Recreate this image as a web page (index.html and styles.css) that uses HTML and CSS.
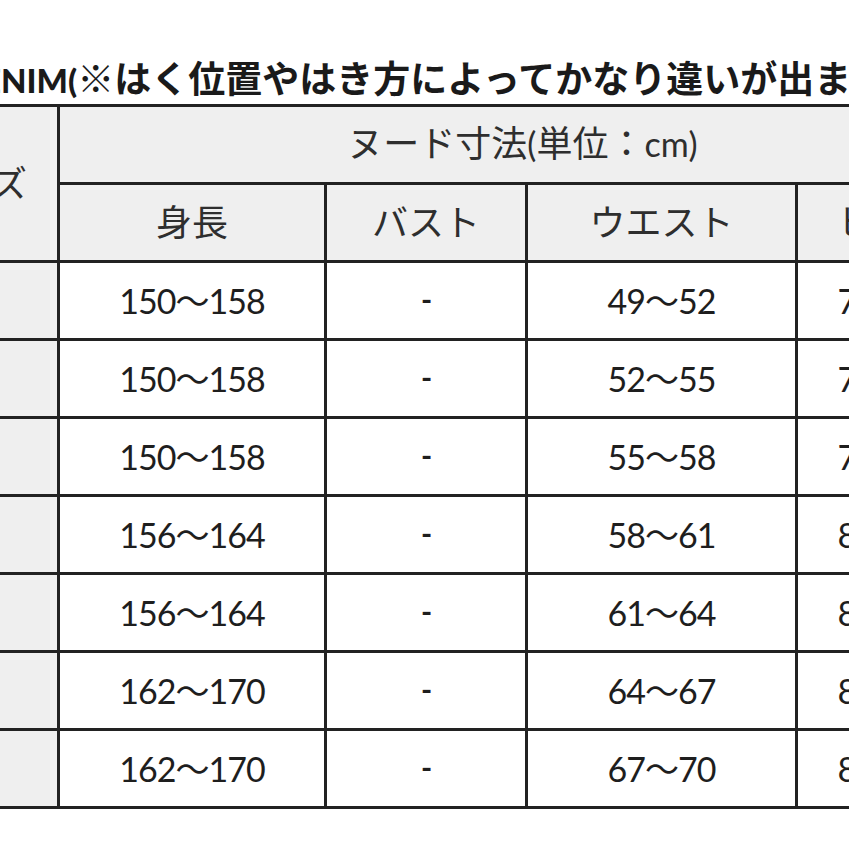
FILE: index.html
```html
<!DOCTYPE html>
<html lang="ja">
<head>
<meta charset="utf-8">
<title>DENIM サイズ表</title>
<link rel="stylesheet" href="styles.css">
</head>
<body>
<div class="page">
  <div class="title"><span class="lat">DENIM(</span>※はく位置やはき方によってかなり違いが出ます<span class="lat">)</span></div>
  <table class="size-table">
    <colgroup>
      <col class="c-size">
      <col class="c-height">
      <col class="c-bust">
      <col class="c-waist">
      <col class="c-hip">
    </colgroup>
    <thead>
      <tr>
        <th rowspan="2" class="size-h">サイズ</th>
        <th colspan="4">ヌード寸法<span class="lat">(</span>単位：<span class="lat">cm)</span></th>
      </tr>
      <tr>
        <th>身長</th>
        <th>バスト</th>
        <th>ウエスト</th>
        <th>ヒップ</th>
      </tr>
    </thead>
    <tbody>
      <tr><td class="size"></td><td>150〜158</td><td class="dash">-</td><td>49〜52</td><td>76〜80</td></tr>
      <tr><td class="size"></td><td>150〜158</td><td class="dash">-</td><td>52〜55</td><td>78〜82</td></tr>
      <tr><td class="size"></td><td>150〜158</td><td class="dash">-</td><td>55〜58</td><td>79〜83</td></tr>
      <tr><td class="size"></td><td>156〜164</td><td class="dash">-</td><td>58〜61</td><td>80〜84</td></tr>
      <tr><td class="size"></td><td>156〜164</td><td class="dash">-</td><td>61〜64</td><td>82〜86</td></tr>
      <tr><td class="size"></td><td>162〜170</td><td class="dash">-</td><td>64〜67</td><td>84〜88</td></tr>
      <tr><td class="size"></td><td>162〜170</td><td class="dash">-</td><td>67〜70</td><td>86〜90</td></tr>
    </tbody>
  </table>
</div>
</body>
</html>
```

FILE: styles.css
```css
html, body {
  margin: 0;
  padding: 0;
  background: #ffffff;
  overflow: hidden;
}

body {
  font-family: "Lato", "Noto Sans CJK JP", sans-serif;
  color: #222222;
}

.page {
  width: 1200px;
}

.title {
  margin: 61px 0 7px -43px;
  height: 36px;
  line-height: 36px;
  font-size: 37px;
  font-weight: 700;
  white-space: nowrap;
  color: #1a1a1a;
}

.title .lat {
  font-size: 33px;
  font-weight: 900;
}

.size-table {
  margin-left: -113px;
  border-collapse: collapse;
  table-layout: fixed;
  width: 1098px;
}

.c-size { width: 170px; }
.c-height { width: 267px; }
.c-bust { width: 201px; }
.c-waist { width: 270px; }
.c-hip { width: 190px; }

.size-table th,
.size-table td {
  border: 3px solid #222222;
  padding: 0;
  text-align: center;
  vertical-align: middle;
  white-space: nowrap;
}

.size-table th {
  height: 71px;
  background: #efefef;
  font-family: "Noto Sans CJK JP", sans-serif;
  font-weight: 400;
  font-size: 36px;
  line-height: 1.2;
  color: #2e2e2e;
  padding-bottom: 4px;
}

.size-table th .lat {
  font-family: "Lato", "Noto Sans CJK JP", sans-serif;
  font-size: 34px;
}

.size-table td {
  height: 72px;
  background: #ffffff;
  font-size: 34px;
  letter-spacing: -1px;
  color: #1e1e1e;
  padding-bottom: 3px;
}

.size-table td.size {
  background: #efefef;
}

.size-table td.dash {
  font-weight: 700;
  font-size: 30px;
}
```
